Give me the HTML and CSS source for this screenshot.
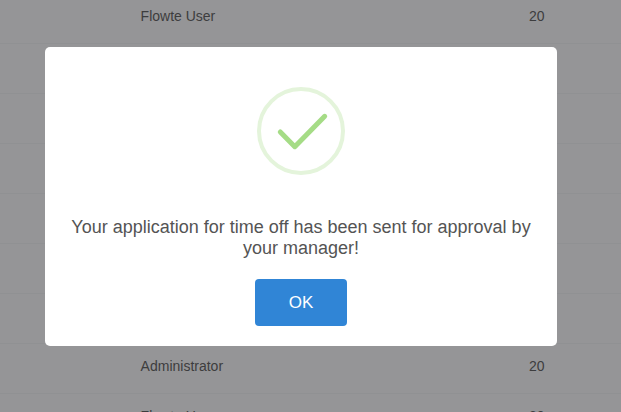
FILE: index.html
```html
<!DOCTYPE html>
<html lang="en">
<head>
<meta charset="utf-8">
<title>Time off</title>
<link rel="stylesheet" href="styles.css">
</head>
<body>
<main class="list">
  <div class="row"><span class="name">Flowte User</span><span class="days">20</span></div>
  <div class="row"></div>
  <div class="row"></div>
  <div class="row"></div>
  <div class="row"></div>
  <div class="row"></div>
  <div class="row"></div>
  <div class="row"><span class="name">Administrator</span><span class="days">20</span></div>
  <div class="row"><span class="name">Flowte User</span><span class="days">20</span></div>
</main>
<div class="overlay">
  <div class="modal" role="dialog">
    <svg class="icon" viewBox="0 0 88 88" fill="none">
      <circle cx="44" cy="44" r="42" stroke="#e4f4db" stroke-width="4"/>
      <path d="M23.3 45 L37.8 59.7 L67.7 29.3" stroke="#a5dc86" stroke-width="5" stroke-linecap="round" stroke-linejoin="round"/>
    </svg>
    <p class="message">Your application for time off has been sent for approval by your manager!</p>
    <button class="confirm">OK</button>
  </div>
</div>
</body>
</html>
```

FILE: styles.css
```css
* {
  box-sizing: border-box;
}

body {
  margin: 0;
  height: 412px;
  overflow: hidden;
  background: #959597;
  font-family: "Liberation Sans", Arial, sans-serif;
}

.list {
  height: 418px;
  margin-top: -6px;
  overflow: hidden;
}

.row {
  display: flex;
  justify-content: space-between;
  height: 50px;
  padding: 12px 76.5px 0 140.6px;
  border-bottom: 1px solid #909193;
  color: #3d3d3e;
  font-size: 14px;
  line-height: 20px;
}

.overlay {
  position: fixed;
  inset: 0;
  padding: 47px 0 0 45px;
}

.modal {
  display: flex;
  flex-direction: column;
  align-items: center;
  width: 512px;
  height: 299px;
  padding: 40px 20px 20px;
  border-radius: 5px;
  background: #fff;
}

.icon {
  width: 88px;
  height: 88px;
}

.message {
  margin: 42px 0 20px;
  color: #545454;
  font-size: 18px;
  line-height: 21px;
  text-align: center;
}

.confirm {
  width: 92px;
  height: 47px;
  padding: 0;
  border: 0;
  border-radius: 4px;
  background: #3085d6;
  color: #fff;
  font: 17px "Liberation Sans", Arial, sans-serif;
}
```
